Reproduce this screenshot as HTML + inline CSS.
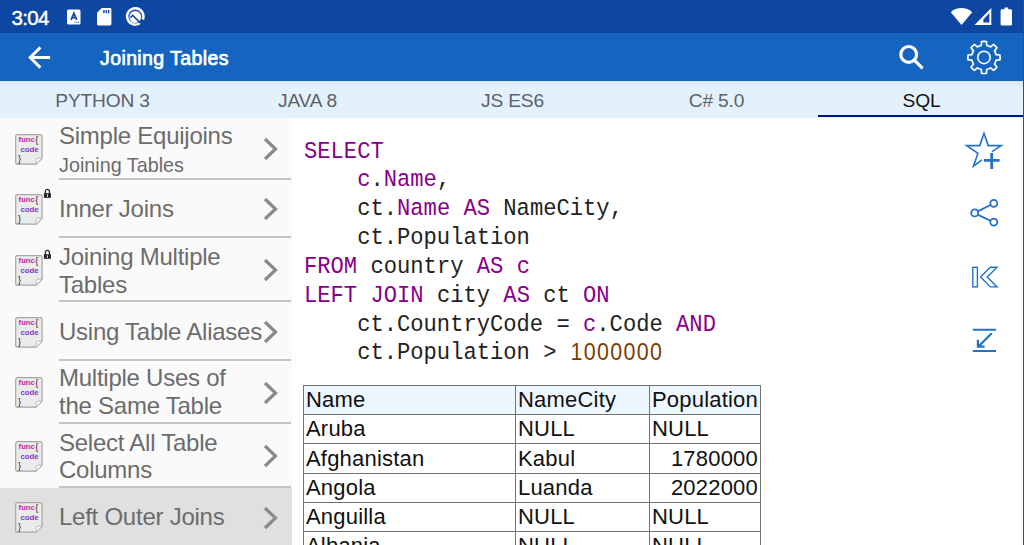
<!DOCTYPE html>
<html><head><meta charset="utf-8">
<style>
*{margin:0;padding:0;box-sizing:border-box}
html,body{width:1024px;height:545px;overflow:hidden;background:#fff;font-family:"Liberation Sans",sans-serif}
.abs{position:absolute}
.ic{position:absolute;display:block;overflow:visible}
#status{left:0;top:0;width:1024px;height:33px;background:#0E47A1}
#toolbar{left:0;top:33px;width:1024px;height:48px;background:#1565C0}
#tabs{left:0;top:81px;width:1024px;height:37px;background:linear-gradient(#D9E6EF 0px,#DDEAF3 2px,#E3F1FC 6px,#E3F1FC 37px)}
.tab{position:absolute;top:0;height:34px;width:205px;text-align:center;font-size:19.2px;letter-spacing:-0.2px;line-height:40px;color:#5E6166}
#list{left:0;top:118px;width:292px;height:427px;background:#FAFAFA}
.sep{position:absolute;left:59px;width:232px;height:2px;background:#C4C4C4}
.ttl{position:absolute;left:59px;font-size:24px;letter-spacing:-0.25px;color:#6C6C6C;white-space:nowrap}
.sub{position:absolute;left:59px;font-size:19.8px;color:#6C6C6C;white-space:nowrap}
.code{position:absolute;left:304px;top:138.2px;font-family:"Liberation Mono",monospace;font-size:22.15px;line-height:26.42px;color:#222;white-space:pre;transform:scale(1,1.09);transform-origin:0 0}
.k{color:#880088}
.n{color:#7A3D00}
.d{display:inline-block;width:13.29px;text-align:center;font-family:"Liberation Sans",sans-serif;font-size:21.5px;line-height:20px;position:relative;top:1px}
table{position:absolute;left:303px;top:385px;border-collapse:collapse;font-size:22px;letter-spacing:0.2px;color:#111}
td{border:1px solid #727272;height:29.2px;padding:1.2px 2px 0 2px;line-height:25px;white-space:nowrap;vertical-align:top}
</style></head><body>
<div id="status" class="abs">
  <div class="abs" style="left:11.6px;top:5.5px;font-size:20.5px;letter-spacing:-0.7px;-webkit-text-stroke:0.45px #fff;line-height:24px;color:#fff">3:04</div>
  <svg class="ic" style="left:67px;top:9px" width="14" height="16" viewBox="0 0 14 16">
    <rect x="0" y="0.5" width="13.5" height="15" rx="1.5" fill="#fff"/>
    <path d="M4.1 10.8 L6.9 4.1 L9.7 10.8 M5.1 8.7 H8.7" fill="none" stroke="#0E47A1" stroke-width="1.7"/>
    <rect x="7.4" y="12.8" width="1.1" height="1.1" fill="#3D6AB5"/><rect x="9.2" y="12.8" width="1.1" height="1.1" fill="#3D6AB5"/><rect x="11" y="12.8" width="1.1" height="1.1" fill="#3D6AB5"/>
  </svg>
  <svg class="ic" style="left:97.4px;top:8px" width="15" height="18" viewBox="0 0 15 18">
    <path d="M4.8 0 H13 Q14.4 0 14.4 1.4 V16.1 Q14.4 17.5 13 17.5 H1.4 Q0 17.5 0 16.1 V4.8 Z" fill="#fff"/>
    <rect x="6.2" y="2" width="1.4" height="3.2" fill="#0E47A1"/><rect x="8.6" y="2" width="1.4" height="3.2" fill="#0E47A1"/><rect x="11" y="2" width="1.4" height="3.2" fill="#0E47A1"/>
  </svg>
  <svg class="ic" style="left:120px;top:3px" width="30" height="27" viewBox="0 0 30 27">
    <path d="M20.00 20.12 A8.2 8.2 0 1 1 22.90 16.47" fill="none" stroke="#fff" stroke-width="2.4"/>
    <circle cx="15.3" cy="14" r="5.9" fill="#fff"/>
    <path d="M10.4 14.6 L12.7 12.3 L19.9 19.6" fill="none" stroke="#0E47A1" stroke-width="1.6"/>
  </svg>
  <svg class="ic" style="left:950px;top:7px" width="23" height="19" viewBox="0 0 23 19">
    <path d="M11.5 18 L0.8 5.2 A16 16 0 0 1 22.2 5.2 Z" fill="#fff"/>
  </svg>
  <svg class="ic" style="left:974px;top:7px" width="18" height="19" viewBox="0 0 18 19">
    <path d="M0.5 18 L17.3 1 V18 Z" fill="#fff"/>
    <path d="M9.4 12.4 L15.3 6 V15.5 H9.4 Z" fill="#0E47A1"/>
  </svg>
  <svg class="ic" style="left:1000px;top:7px" width="13" height="19" viewBox="0 0 13 19">
    <path d="M4.5 0.5 H8.2 V2.3 H10.8 Q12 2.3 12 3.5 V17.5 Q12 18.6 10.8 18.6 H1.7 Q0.6 18.6 0.6 17.5 V3.5 Q0.6 2.3 1.7 2.3 H4.5 Z" fill="#fff"/>
  </svg>
</div>
<div id="toolbar" class="abs">
  <svg class="ic" style="left:27px;top:12px" width="25" height="24" viewBox="0 0 25 24">
    <path d="M23.1 12.5 H3.4 M13.4 2.4 L3.2 12.5 L13.4 22.6" fill="none" stroke="#fff" stroke-width="2.9"/>
  </svg>
  <div class="abs" style="left:100px;top:13.1px;font-size:19.5px;font-weight:normal;-webkit-text-stroke:0.7px #fff;letter-spacing:0.4px;line-height:24px;color:#fff">Joining Tables</div>
  <svg class="ic" style="left:896px;top:9px" width="30" height="30" viewBox="0 0 30 30">
    <circle cx="12.7" cy="12.4" r="7.9" fill="none" stroke="#fff" stroke-width="3.2"/>
    <path d="M18.3 18.2 L26.6 26.4" stroke="#fff" stroke-width="3.3"/>
  </svg>
  <svg class="ic" style="left:964px;top:4px" width="40" height="40" viewBox="0 0 40 40">
    <path fill="none" stroke="#fff" stroke-width="1.7" stroke-linejoin="round" d="M17.30 8.30 L17.61 4.48 A16.1 16.1 0 0 1 22.39 4.48 L22.70 8.30 A12.4 12.4 0 0 1 26.64 9.93 L29.57 7.45 A16.1 16.1 0 0 1 32.95 10.83 L30.47 13.76 A12.4 12.4 0 0 1 32.10 17.70 L35.92 18.01 A16.1 16.1 0 0 1 35.92 22.79 L32.10 23.10 A12.4 12.4 0 0 1 30.47 27.04 L32.95 29.97 A16.1 16.1 0 0 1 29.57 33.35 L26.64 30.87 A12.4 12.4 0 0 1 22.70 32.50 L22.39 36.32 A16.1 16.1 0 0 1 17.61 36.32 L17.30 32.50 A12.4 12.4 0 0 1 13.36 30.87 L10.43 33.35 A16.1 16.1 0 0 1 7.05 29.97 L9.53 27.04 A12.4 12.4 0 0 1 7.90 23.10 L4.08 22.79 A16.1 16.1 0 0 1 4.08 18.01 L7.90 17.70 A12.4 12.4 0 0 1 9.53 13.76 L7.05 10.83 A16.1 16.1 0 0 1 10.43 7.45 L13.36 9.93 A12.4 12.4 0 0 1 17.30 8.30 Z"/>
    <circle cx="20" cy="20.4" r="6.2" fill="none" stroke="#fff" stroke-width="1.6"/>
  </svg>
</div>
<div id="tabs" class="abs">
  <div class="tab" style="left:0">PYTHON 3</div>
  <div class="tab" style="left:205px">JAVA 8</div>
  <div class="tab" style="left:410px">JS ES6</div>
  <div class="tab" style="left:614px">C# 5.0</div>
  <div class="tab" style="left:819px;color:#111">SQL</div>
  <div class="abs" style="left:818px;top:34px;width:206px;height:2px;background:#00138F"></div>
</div>
<div id="list" class="abs"></div>
<div class="sep" style="top:178px"></div>
<div class="ttl" style="top:121.58px;line-height:27.60px">Simple Equijoins</div>
<div class="sub" style="top:153.65px;line-height:22.77px">Joining Tables</div>
<svg class="ic" style="left:15.4px;top:134px" width="28" height="31" viewBox="0 0 28 31">
<path d="M0.7 2.6 Q0.7 0.7 2.6 0.7 H25.2 Q27.1 0.7 27.1 2.6 V24.2 L21.2 30.2 H2.6 Q0.7 30.2 0.7 28.3 Z" fill="#EBEBEB" stroke="#A6A6A6" stroke-width="1.2"/>
<path d="M27.1 24.2 H22.6 Q21.2 24.2 21.2 25.6 V30.2 Z" fill="#FAFAFA" stroke="#B4B4B4" stroke-width="0.9"/>
<text x="3.6" y="7.7" font-family="Liberation Sans" font-weight="bold" font-size="7.6" fill="#C41FA5" textLength="16.2" lengthAdjust="spacingAndGlyphs">func</text>
<text x="20.3" y="8.6" font-family="Liberation Sans" font-size="9" fill="#222">&#123;</text>
<text x="5.4" y="18.3" font-family="Liberation Sans" font-weight="bold" font-size="7.8" fill="#7B3AC4" textLength="18.2" lengthAdjust="spacingAndGlyphs">code</text>
<text x="3" y="28" font-family="Liberation Sans" font-size="9" fill="#222">&#125;</text>
</svg>
<svg class="ic" style="left:262px;top:137.0px" width="17" height="24" viewBox="0 0 17 24"><path d="M3 2 L13.5 12 L3 22" fill="none" stroke="#8A8A8A" stroke-width="3.2"/></svg>
<div class="sep" style="top:236px"></div>
<div class="ttl" style="top:195.08px;line-height:27.60px">Inner Joins</div>
<svg class="ic" style="left:15.4px;top:194px" width="28" height="31" viewBox="0 0 28 31">
<path d="M0.7 2.6 Q0.7 0.7 2.6 0.7 H25.2 Q27.1 0.7 27.1 2.6 V24.2 L21.2 30.2 H2.6 Q0.7 30.2 0.7 28.3 Z" fill="#EBEBEB" stroke="#A6A6A6" stroke-width="1.2"/>
<path d="M27.1 24.2 H22.6 Q21.2 24.2 21.2 25.6 V30.2 Z" fill="#FAFAFA" stroke="#B4B4B4" stroke-width="0.9"/>
<text x="3.6" y="7.7" font-family="Liberation Sans" font-weight="bold" font-size="7.6" fill="#C41FA5" textLength="16.2" lengthAdjust="spacingAndGlyphs">func</text>
<text x="20.3" y="8.6" font-family="Liberation Sans" font-size="9" fill="#222">&#123;</text>
<text x="5.4" y="18.3" font-family="Liberation Sans" font-weight="bold" font-size="7.8" fill="#7B3AC4" textLength="18.2" lengthAdjust="spacingAndGlyphs">code</text>
<text x="3" y="28" font-family="Liberation Sans" font-size="9" fill="#222">&#125;</text>
</svg>
<svg class="ic" style="left:43px;top:188px" width="9" height="11" viewBox="0 0 9 11">
<path d="M2.4 5.6 V3.3 A2 2 0 0 1 6.4 3.3 V5.6" fill="none" stroke="#2A2A2A" stroke-width="1.3"/>
<rect x="0.9" y="5.2" width="7" height="4.6" fill="#222"/>
<rect x="3.9" y="6.3" width="1" height="2.6" fill="#E8E8E8"/>
</svg>
<svg class="ic" style="left:262px;top:197.0px" width="17" height="24" viewBox="0 0 17 24"><path d="M3 2 L13.5 12 L3 22" fill="none" stroke="#8A8A8A" stroke-width="3.2"/></svg>
<div class="sep" style="top:300px"></div>
<div class="ttl" style="top:243.28px;line-height:27.60px">Joining Multiple</div>
<div class="ttl" style="top:270.98px;line-height:27.60px">Tables</div>
<svg class="ic" style="left:15.4px;top:255px" width="28" height="31" viewBox="0 0 28 31">
<path d="M0.7 2.6 Q0.7 0.7 2.6 0.7 H25.2 Q27.1 0.7 27.1 2.6 V24.2 L21.2 30.2 H2.6 Q0.7 30.2 0.7 28.3 Z" fill="#EBEBEB" stroke="#A6A6A6" stroke-width="1.2"/>
<path d="M27.1 24.2 H22.6 Q21.2 24.2 21.2 25.6 V30.2 Z" fill="#FAFAFA" stroke="#B4B4B4" stroke-width="0.9"/>
<text x="3.6" y="7.7" font-family="Liberation Sans" font-weight="bold" font-size="7.6" fill="#C41FA5" textLength="16.2" lengthAdjust="spacingAndGlyphs">func</text>
<text x="20.3" y="8.6" font-family="Liberation Sans" font-size="9" fill="#222">&#123;</text>
<text x="5.4" y="18.3" font-family="Liberation Sans" font-weight="bold" font-size="7.8" fill="#7B3AC4" textLength="18.2" lengthAdjust="spacingAndGlyphs">code</text>
<text x="3" y="28" font-family="Liberation Sans" font-size="9" fill="#222">&#125;</text>
</svg>
<svg class="ic" style="left:43px;top:249px" width="9" height="11" viewBox="0 0 9 11">
<path d="M2.4 5.6 V3.3 A2 2 0 0 1 6.4 3.3 V5.6" fill="none" stroke="#2A2A2A" stroke-width="1.3"/>
<rect x="0.9" y="5.2" width="7" height="4.6" fill="#222"/>
<rect x="3.9" y="6.3" width="1" height="2.6" fill="#E8E8E8"/>
</svg>
<svg class="ic" style="left:262px;top:258.0px" width="17" height="24" viewBox="0 0 17 24"><path d="M3 2 L13.5 12 L3 22" fill="none" stroke="#8A8A8A" stroke-width="3.2"/></svg>
<div class="sep" style="top:359px"></div>
<div class="ttl" style="top:317.78px;line-height:27.60px">Using Table Aliases</div>
<svg class="ic" style="left:15.4px;top:316.6px" width="28" height="31" viewBox="0 0 28 31">
<path d="M0.7 2.6 Q0.7 0.7 2.6 0.7 H25.2 Q27.1 0.7 27.1 2.6 V24.2 L21.2 30.2 H2.6 Q0.7 30.2 0.7 28.3 Z" fill="#EBEBEB" stroke="#A6A6A6" stroke-width="1.2"/>
<path d="M27.1 24.2 H22.6 Q21.2 24.2 21.2 25.6 V30.2 Z" fill="#FAFAFA" stroke="#B4B4B4" stroke-width="0.9"/>
<text x="3.6" y="7.7" font-family="Liberation Sans" font-weight="bold" font-size="7.6" fill="#C41FA5" textLength="16.2" lengthAdjust="spacingAndGlyphs">func</text>
<text x="20.3" y="8.6" font-family="Liberation Sans" font-size="9" fill="#222">&#123;</text>
<text x="5.4" y="18.3" font-family="Liberation Sans" font-weight="bold" font-size="7.8" fill="#7B3AC4" textLength="18.2" lengthAdjust="spacingAndGlyphs">code</text>
<text x="3" y="28" font-family="Liberation Sans" font-size="9" fill="#222">&#125;</text>
</svg>
<svg class="ic" style="left:262px;top:319.5px" width="17" height="24" viewBox="0 0 17 24"><path d="M3 2 L13.5 12 L3 22" fill="none" stroke="#8A8A8A" stroke-width="3.2"/></svg>
<div class="sep" style="top:422px"></div>
<div class="ttl" style="top:364.38px;line-height:27.60px">Multiple Uses of</div>
<div class="ttl" style="top:392.18px;line-height:27.60px">the Same Table</div>
<svg class="ic" style="left:15.4px;top:377.3px" width="28" height="31" viewBox="0 0 28 31">
<path d="M0.7 2.6 Q0.7 0.7 2.6 0.7 H25.2 Q27.1 0.7 27.1 2.6 V24.2 L21.2 30.2 H2.6 Q0.7 30.2 0.7 28.3 Z" fill="#EBEBEB" stroke="#A6A6A6" stroke-width="1.2"/>
<path d="M27.1 24.2 H22.6 Q21.2 24.2 21.2 25.6 V30.2 Z" fill="#FAFAFA" stroke="#B4B4B4" stroke-width="0.9"/>
<text x="3.6" y="7.7" font-family="Liberation Sans" font-weight="bold" font-size="7.6" fill="#C41FA5" textLength="16.2" lengthAdjust="spacingAndGlyphs">func</text>
<text x="20.3" y="8.6" font-family="Liberation Sans" font-size="9" fill="#222">&#123;</text>
<text x="5.4" y="18.3" font-family="Liberation Sans" font-weight="bold" font-size="7.8" fill="#7B3AC4" textLength="18.2" lengthAdjust="spacingAndGlyphs">code</text>
<text x="3" y="28" font-family="Liberation Sans" font-size="9" fill="#222">&#125;</text>
</svg>
<svg class="ic" style="left:262px;top:380.5px" width="17" height="24" viewBox="0 0 17 24"><path d="M3 2 L13.5 12 L3 22" fill="none" stroke="#8A8A8A" stroke-width="3.2"/></svg>
<div class="sep" style="top:486px"></div>
<div class="ttl" style="top:428.58px;line-height:27.60px">Select All Table</div>
<div class="ttl" style="top:456.08px;line-height:27.60px">Columns</div>
<svg class="ic" style="left:15.4px;top:441px" width="28" height="31" viewBox="0 0 28 31">
<path d="M0.7 2.6 Q0.7 0.7 2.6 0.7 H25.2 Q27.1 0.7 27.1 2.6 V24.2 L21.2 30.2 H2.6 Q0.7 30.2 0.7 28.3 Z" fill="#EBEBEB" stroke="#A6A6A6" stroke-width="1.2"/>
<path d="M27.1 24.2 H22.6 Q21.2 24.2 21.2 25.6 V30.2 Z" fill="#FAFAFA" stroke="#B4B4B4" stroke-width="0.9"/>
<text x="3.6" y="7.7" font-family="Liberation Sans" font-weight="bold" font-size="7.6" fill="#C41FA5" textLength="16.2" lengthAdjust="spacingAndGlyphs">func</text>
<text x="20.3" y="8.6" font-family="Liberation Sans" font-size="9" fill="#222">&#123;</text>
<text x="5.4" y="18.3" font-family="Liberation Sans" font-weight="bold" font-size="7.8" fill="#7B3AC4" textLength="18.2" lengthAdjust="spacingAndGlyphs">code</text>
<text x="3" y="28" font-family="Liberation Sans" font-size="9" fill="#222">&#125;</text>
</svg>
<svg class="ic" style="left:262px;top:444.0px" width="17" height="24" viewBox="0 0 17 24"><path d="M3 2 L13.5 12 L3 22" fill="none" stroke="#8A8A8A" stroke-width="3.2"/></svg>
<div class="abs" style="left:0;top:488px;width:292px;height:57px;background:#E0E0E0"></div>
<div class="ttl" style="top:502.98px;line-height:27.60px">Left Outer Joins</div>
<svg class="ic" style="left:15.4px;top:502px" width="28" height="31" viewBox="0 0 28 31">
<path d="M0.7 2.6 Q0.7 0.7 2.6 0.7 H25.2 Q27.1 0.7 27.1 2.6 V24.2 L21.2 30.2 H2.6 Q0.7 30.2 0.7 28.3 Z" fill="#EBEBEB" stroke="#A6A6A6" stroke-width="1.2"/>
<path d="M27.1 24.2 H22.6 Q21.2 24.2 21.2 25.6 V30.2 Z" fill="#FAFAFA" stroke="#B4B4B4" stroke-width="0.9"/>
<text x="3.6" y="7.7" font-family="Liberation Sans" font-weight="bold" font-size="7.6" fill="#C41FA5" textLength="16.2" lengthAdjust="spacingAndGlyphs">func</text>
<text x="20.3" y="8.6" font-family="Liberation Sans" font-size="9" fill="#222">&#123;</text>
<text x="5.4" y="18.3" font-family="Liberation Sans" font-weight="bold" font-size="7.8" fill="#7B3AC4" textLength="18.2" lengthAdjust="spacingAndGlyphs">code</text>
<text x="3" y="28" font-family="Liberation Sans" font-size="9" fill="#222">&#125;</text>
</svg>
<svg class="ic" style="left:262px;top:505.5px" width="17" height="24" viewBox="0 0 17 24"><path d="M3 2 L13.5 12 L3 22" fill="none" stroke="#8A8A8A" stroke-width="3.2"/></svg>
<div class="code"><span class="k">SELECT</span>
    <span class="k">c</span>.<span class="k">Name</span>,
    ct.<span class="k">Name</span> <span class="k">AS</span> NameCity,
    ct.Population
<span class="k">FROM</span> country <span class="k">AS</span> <span class="k">c</span>
<span class="k">LEFT</span> <span class="k">JOIN</span> city <span class="k">AS</span> ct <span class="k">ON</span>
    ct.CountryCode = <span class="k">c</span>.Code <span class="k">AND</span>
    ct.Population &gt; <span class="n"><span class="d">1</span><span class="d">0</span><span class="d">0</span><span class="d">0</span><span class="d">0</span><span class="d">0</span><span class="d">0</span></span></div>
<table>
<tr style="background:#EEF6FE"><td style="width:212px">Name</td><td style="width:134px">NameCity</td><td style="width:111px">Population</td></tr>
<tr><td>Aruba</td><td>NULL</td><td>NULL</td></tr>
<tr><td>Afghanistan</td><td>Kabul</td><td style="text-align:right">1780000</td></tr>
<tr><td>Angola</td><td>Luanda</td><td style="text-align:right">2022000</td></tr>
<tr><td>Anguilla</td><td>NULL</td><td>NULL</td></tr>
<tr><td>Albania</td><td>NULL</td><td>NULL</td></tr>
</table>
<!-- right side action icons -->
<svg class="ic" style="left:960px;top:125px" width="50" height="50" viewBox="0 0 50 50">
  <path d="M32 26.6 L41.2 20.6 L28.2 20.6 L24 8.2 L19.8 20.6 L6.6 20.6 L17.9 28.4 L13.4 41.2 L21.9 34.8" fill="none" stroke="#2372CA" stroke-width="1.6" stroke-linejoin="miter"/>
  <path d="M24 35.3 H39.6 M31.7 28 V43.9" stroke="#2372CA" stroke-width="2.8"/>
</svg>
<svg class="ic" style="left:960px;top:190px" width="50" height="50" viewBox="0 0 50 50">
  <path d="M17.7 21.4 L31 14.7 M17.7 24.6 L31 31" stroke="#2372CA" stroke-width="1.8"/>
  <circle cx="14.7" cy="22.9" r="3.5" fill="#fff" stroke="#2372CA" stroke-width="1.8"/>
  <circle cx="33.8" cy="13.3" r="3.5" fill="#fff" stroke="#2372CA" stroke-width="1.8"/>
  <circle cx="33.8" cy="32.1" r="3.5" fill="#fff" stroke="#2372CA" stroke-width="1.8"/>
</svg>
<svg class="ic" style="left:960px;top:255px" width="50" height="50" viewBox="0 0 50 50">
  <rect x="12.8" y="12.3" width="4.6" height="19.6" fill="none" stroke="#2372CA" stroke-width="1.4"/>
  <path d="M37 12.3 H30.3 L20.6 22.1 L30.3 31.9 H37 L27.2 22.1 Z" fill="none" stroke="#2372CA" stroke-width="1.4" stroke-linejoin="miter"/>
</svg>
<svg class="ic" style="left:960px;top:315px" width="50" height="50" viewBox="0 0 50 50">
  <path d="M12.8 14.7 H36 M12.8 36 H36" stroke="#2372CA" stroke-width="2"/>
  <path d="M31.7 18.3 L18.5 31.5 M17.9 24.8 V31.7 H24.6" fill="none" stroke="#2372CA" stroke-width="2.2"/>
</svg>
<div class="abs" style="left:1023px;top:0;width:1px;height:545px;background:#4C4C4C"></div>
</body></html>
